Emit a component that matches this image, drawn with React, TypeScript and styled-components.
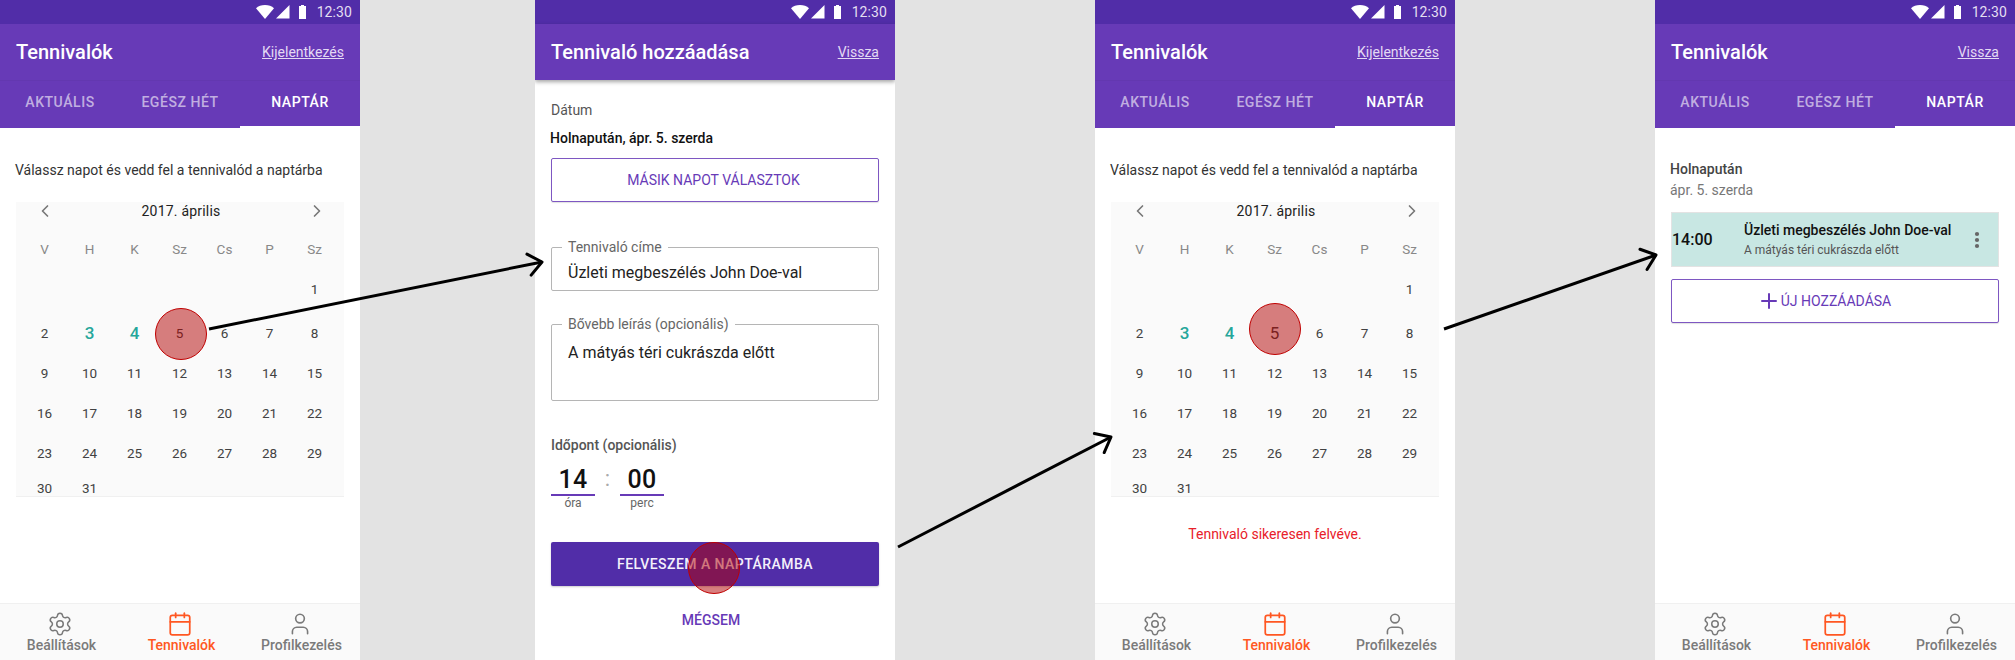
import React from 'react';
import styled, { createGlobalStyle } from 'styled-components';
import { Settings, Calendar, User, ChevronLeft, ChevronRight, Plus } from 'lucide-react';

const Global = createGlobalStyle`
  html, body { margin: 0; padding: 0; background: #e3e3e3; }
  * { box-sizing: border-box; }
  body { font-family: Roboto, "Liberation Sans", sans-serif; }
`;
const Page = styled.div`
  position: relative; width: 2015px; height: 660px; overflow: hidden;
  display: flex; justify-content: space-between; background: #e3e3e3;
`;
const Group = styled.div<{ $gap: number }>`display: flex; gap: ${p => p.$gap}px;`;
const Phone = styled.div`
  position: relative; width: 360px; height: 660px; background: #fff;
  display: flex; flex-direction: column; overflow: hidden;
`;
const StatusBar = styled.div`
  height: 24px; background: #512da8; color: #fff; font-size: 14px;
  display: flex; align-items: center; justify-content: flex-end; padding-right: 8px; gap: 8px;
`;
const StatusTime = styled.span`color: #e4dff2; letter-spacing: .1px; font-weight: 400; line-height: 24px;`;
const AppBar = styled.div<{ $shadow?: boolean }>`
  height: 56px; background: #673ab7; display: flex; align-items: center; justify-content: space-between;
  padding: 0 16px; position: relative; z-index: 1;
  box-shadow: ${p => p.$shadow ? '0 2px 4px rgba(0,0,0,.35)' : 'none'};
`;
const AppTitle = styled.div`font-size: 20px; font-weight: 500; color: #fff;`;
const AppLink = styled.a`font-size: 14px; color: #e3d9f3; text-decoration: underline;`;
const Tabs = styled.div`height: 48px; background: #673ab7; display: flex; border-top: 1px solid #6338b0;`;
const Tab = styled.div<{ $active?: boolean }>`
  flex: 1; display: flex; align-items: center; justify-content: center;
  font-size: 14px; font-weight: 500; letter-spacing: .55px; padding-bottom: 2px; margin-top: -1px;
  color: ${p => p.$active ? '#fff' : 'rgba(255,255,255,.6)'};
  border-bottom: 2px solid ${p => p.$active ? '#fff' : 'transparent'};
`;
const Content = styled.div`flex: 1; padding: 0 16px; display: flex; flex-direction: column; min-height: 0;`;
const Intro = styled.div`font-size: 14px; color: #333; margin: 32px -1px 0; line-height: 20px;`;
const Cal = styled.div`
  margin-top: 22px; height: 295px; background: #fafafa; border-bottom: 1px solid #f0f0f0;
  padding: 0 6px; display: flex; flex-direction: column;
`;
const CalHead = styled.div`height: 18px; display: flex; align-items: center; justify-content: space-between; padding: 0 11px 0 13px; margin-bottom: 18px; color: #777;`;
const CalTitle = styled.div`font-size: 14px; font-weight: 400; color: #222; letter-spacing: .2px;`;
const Week = styled.div<{ $h: number; $end?: boolean; $mt?: number }>`
  display: grid; grid-template-columns: repeat(7, 45px); height: ${p => p.$h}px;
  margin-top: ${p => p.$mt ?? 0}px; align-items: ${p => p.$end ? 'end' : 'center'};
`;
const Day = styled.div<{ $kind?: string }>`
  text-align: center; line-height: 16px;
  font-size: ${p => p.$kind === 'mark' ? '17px' : p.$kind === 'big' ? '17px' : '13.5px'};
  font-weight: ${p => p.$kind === 'mark' ? 500 : 400};
  color: ${p => p.$kind === 'mark' ? '#26a69a' : p.$kind === 'head' ? '#888' : '#424242'};
`;
const Spacer = styled.div`height: 9px;`;
const Tap = styled.div`
  position: absolute; width: 52px; height: 52px; border-radius: 50%;
  background: rgba(178,0,0,.5); border: 1px solid #c00000;
`;
const Bottom = styled.div`
  height: 57px; background: #fafafa; border-top: 1px solid #f0f0f0; display: flex; flex-shrink: 0;
`;
const NavItem = styled.div<{ $active?: boolean }>`
  flex: 1; display: flex; flex-direction: column; align-items: center; padding-top: 7px;
  color: ${p => p.$active ? '#ff5722' : '#7a7a7a'};
`;
const NavLabel = styled.div`font-size: 14px; font-weight: 500; line-height: 16px; padding-left: 3px;`;
const Label = styled.div`font-size: 14px; color: #555; line-height: 16px; margin-top: 22px;`;
const Strong = styled.div`font-size: 14px; font-weight: 500; color: #111; line-height: 16px; margin-top: 12px; margin-left: -1px;`;
const Outline = styled.div`
  height: 44px; border: 1px solid #7e57c2; border-radius: 2px; background: #fff; color: #673ab7;
  display: flex; align-items: center; justify-content: center; font-size: 14px;
  box-shadow: 0 1px 1px rgba(0,0,0,.12);
`;
const OutlineTop = styled(Outline)`margin-top: 12px; padding-right: 3px;`;
const Field = styled.fieldset<{ $h: number; $mt: number }>`
  height: ${p => p.$h}px; margin: ${p => p.$mt}px 0 0; padding: 0 17px 0 10px;
  border: 1px solid #b5b5b5; border-radius: 2px; min-width: 0;
`;
const Legend = styled.legend`font-size: 14px; color: #666; padding: 0 6px; line-height: 14px;`;
const FieldVal = styled.div<{ $mt: number }>`font-size: 16px; color: #222; line-height: 20px; margin: ${p => p.$mt}px 0 0 6px;`;
const TimeLabel = styled.div`font-size: 14px; font-weight: 500; color: #555; line-height: 16px; margin-top: 36px;`;
const TimeRow = styled.div`display: flex; gap: 11px; margin-top: 13px;`;
const TimeCol = styled.div`width: 44px; display: flex; flex-direction: column; align-items: center;`;
const TimeNum = styled.div`
  width: 44px; text-align: center; font-size: 25px; font-weight: 500; color: #111; line-height: 28px;
  border-bottom: 2px solid #673ab7; letter-spacing: .3px;
`;
const TimeSub = styled.div`font-size: 12px; color: #666; line-height: 14px;`;
const Colon = styled.div`width: 3px; font-size: 22px; color: #aaa; line-height: 26px; display: flex; justify-content: center;`;
const Primary = styled.div`
  height: 44px; margin-top: 32px; background: #512da8; color: #f4f0fb; border-radius: 2px;
  display: flex; align-items: center; justify-content: center; font-size: 14px; font-weight: 500; letter-spacing: .45px;
  box-shadow: 0 1px 2px rgba(0,0,0,.2);
`;
const Cancel = styled.div`margin-top: 25px; padding-right: 8px; text-align: center; font-size: 14px; font-weight: 500; color: #673ab7; line-height: 18px;`;
const Msg = styled.div`margin-top: 28px; text-align: center; font-size: 14px; color: #e8202a; line-height: 18px;`;
const DayName = styled.div`font-size: 14px; font-weight: 500; color: #444; line-height: 16px; margin-top: 33px; margin-left: -1px;`;
const DayDate = styled.div`font-size: 14px; color: #777; line-height: 16px; margin-top: 5px; margin-left: -1px;`;
const Item = styled.div`
  height: 55px; margin-top: 14px; background: #c8e7e3; border: 1px solid #e3e3e3;
  display: flex; align-items: center; padding-right: 18px;
`;
const ItemTime = styled.div`width: 72px; font-size: 16px; font-weight: 500; color: #111;`;
const ItemBody = styled.div`flex: 1; display: flex; flex-direction: column; gap: 5px;`;
const ItemTitle = styled.div`font-size: 14px; font-weight: 500; color: #111; line-height: 16px;`;
const ItemSub = styled.div`font-size: 12px; color: #555; line-height: 14px;`;
const OutlineAdd = styled(Outline)`margin-top: 12px; padding-right: 22px;`;
const Arrows = styled.svg`position: absolute; left: 0; top: 0; pointer-events: none;`;

const StatusIcons = () => (
  <svg width="53" height="14" viewBox="0 0 53 14">
    <path d="M0 3.2C2.3 1.2 5.3 0 9 0s6.7 1.2 9 3.2L9 14Z" fill="#fff" />
    <path d="M33.5 0V13.5H20Z" fill="#fff" />
    <path d="M43 1h2V0h3v1h2v13h-7Z" fill="#fff" />
  </svg>
);
const Status = () => (
  <StatusBar>
    <StatusIcons />
    <StatusTime>12:30</StatusTime>
  </StatusBar>
);
const Nav = () => (
  <Bottom>
    <NavItem><Settings size={26} strokeWidth={1.4} /><NavLabel>Beállítások</NavLabel></NavItem>
    <NavItem $active><Calendar size={26} strokeWidth={1.6} /><NavLabel>Tennivalók</NavLabel></NavItem>
    <NavItem><User size={26} strokeWidth={1.5} /><NavLabel>Profilkezelés</NavLabel></NavItem>
  </Bottom>
);
const TabBar = () => (
  <Tabs>
    <Tab>AKTUÁLIS</Tab>
    <Tab>EGÉSZ HÉT</Tab>
    <Tab $active>NAPTÁR</Tab>
  </Tabs>
);
const weeks = [
  { h: 40, mt: 0, d: ['', '', '', '', '', '', '1'] },
  { h: 40, mt: 4, d: ['2', '3', '4', '5', '6', '7', '8'] },
  { h: 40, mt: 0, d: ['9', '10', '11', '12', '13', '14', '15'] },
  { h: 40, mt: 0, d: ['16', '17', '18', '19', '20', '21', '22'] },
  { h: 40, mt: 0, d: ['23', '24', '25', '26', '27', '28', '29'] },
  { h: 23, mt: 0, end: true, d: ['30', '31', '', '', '', '', ''] },
];
const CalendarBox = ({ big }: { big?: boolean }) => (
  <Cal>
    <CalHead>
      <ChevronLeft size={20} strokeWidth={2} />
      <CalTitle>2017. április</CalTitle>
      <ChevronRight size={20} strokeWidth={2} />
    </CalHead>
    <Week $h={22}>
      {['V', 'H', 'K', 'Sz', 'Cs', 'P', 'Sz'].map((d, i) => <Day key={i} $kind="head">{d}</Day>)}
    </Week>
    <Spacer />
    {weeks.map((w, i) => (
      <Week key={i} $h={w.h} $mt={w.mt} $end={w.end}>
        {w.d.map((d, j) => (
          <Day key={j} $kind={d === '3' || d === '4' ? 'mark' : d === '5' && big ? 'big' : undefined}>{d}</Day>
        ))}
      </Week>
    ))}
  </Cal>
);

const Arrow = ({ x1, y1, x2, y2 }: { x1: number; y1: number; x2: number; y2: number }) => {
  const a = Math.atan2(y2 - y1, x2 - x1);
  const L = 17;
  const p = (d: number) => `${x2 - L * Math.cos(a + d)},${y2 - L * Math.sin(a + d)}`;
  return (
    <g fill="none" stroke="#000" strokeWidth="3" strokeLinecap="round" strokeLinejoin="round">
      <line x1={x1} y1={y1} x2={x2} y2={y2} strokeLinecap="butt" />
      <polyline points={`${p(0.68)} ${x2},${y2} ${p(-0.68)}`} />
    </g>
  );
};

export default function App() {
  return (
    <Page>
      <Global />
      <Group $gap={175}>
        <Phone>
          <Status />
          <AppBar><AppTitle>Tennivalók</AppTitle><AppLink>Kijelentkezés</AppLink></AppBar>
          <TabBar />
          <Content>
            <Intro>Válassz napot és vedd fel a tennivalód a naptárba</Intro>
            <CalendarBox />
          </Content>
          <Nav />
        </Phone>
        <Phone>
          <Status />
          <AppBar $shadow><AppTitle>Tennivaló hozzáadása</AppTitle><AppLink>Vissza</AppLink></AppBar>
          <Content>
            <Label>Dátum</Label>
            <Strong>Holnapután, ápr. 5. szerda</Strong>
            <OutlineTop>MÁSIK NAPOT VÁLASZTOK</OutlineTop>
            <Field $h={51} $mt={38}><Legend>Tennivaló címe</Legend><FieldVal $mt={9}>Üzleti megbeszélés John Doe-val</FieldVal></Field>
            <Field $h={84} $mt={26}><Legend>Bővebb leírás (opcionális)</Legend><FieldVal $mt={12}>A mátyás téri cukrászda előtt</FieldVal></Field>
            <TimeLabel>Időpont (opcionális)</TimeLabel>
            <TimeRow>
              <TimeCol><TimeNum>14</TimeNum><TimeSub>óra</TimeSub></TimeCol>
              <Colon>:</Colon>
              <TimeCol><TimeNum>00</TimeNum><TimeSub>perc</TimeSub></TimeCol>
            </TimeRow>
            <Primary>FELVESZEM A NAPTÁRAMBA</Primary>
            <Cancel>MÉGSEM</Cancel>
          </Content>
        </Phone>
      </Group>
      <Group $gap={200}>
        <Phone>
          <Status />
          <AppBar><AppTitle>Tennivalók</AppTitle><AppLink>Kijelentkezés</AppLink></AppBar>
          <TabBar />
          <Content>
            <Intro>Válassz napot és vedd fel a tennivalód a naptárba</Intro>
            <CalendarBox big />
            <Msg>Tennivaló sikeresen felvéve.</Msg>
          </Content>
          <Nav />
        </Phone>
        <Phone>
          <Status />
          <AppBar><AppTitle>Tennivalók</AppTitle><AppLink>Vissza</AppLink></AppBar>
          <TabBar />
          <Content>
            <DayName>Holnapután</DayName>
            <DayDate>ápr. 5. szerda</DayDate>
            <Item>
              <ItemTime>14:00</ItemTime>
              <ItemBody>
                <ItemTitle>Üzleti megbeszélés John Doe-val</ItemTitle>
                <ItemSub>A mátyás téri cukrászda előtt</ItemSub>
              </ItemBody>
              <svg width="6" height="18" viewBox="0 0 6 18"><g fill="#666"><circle cx="3" cy="3" r="2.1" /><circle cx="3" cy="9" r="2.1" /><circle cx="3" cy="15" r="2.1" /></g></svg>
            </Item>
            <OutlineAdd><Plus size={24} strokeWidth={2} />ÚJ HOZZÁADÁSA</OutlineAdd>
          </Content>
          <Nav />
        </Phone>
      </Group>
      <Tap style={{ left: 155, top: 308 }} />
      <Tap style={{ left: 688, top: 542 }} />
      <Tap style={{ left: 1249, top: 303 }} />
      <Arrows width="2015" height="660">
        <Arrow x1={209} y1={329} x2={542} y2={262} />
        <Arrow x1={898} y1={547} x2={1111} y2={437} />
        <Arrow x1={1444} y1={329} x2={1656} y2={255} />
      </Arrows>
    </Page>
  );
}
